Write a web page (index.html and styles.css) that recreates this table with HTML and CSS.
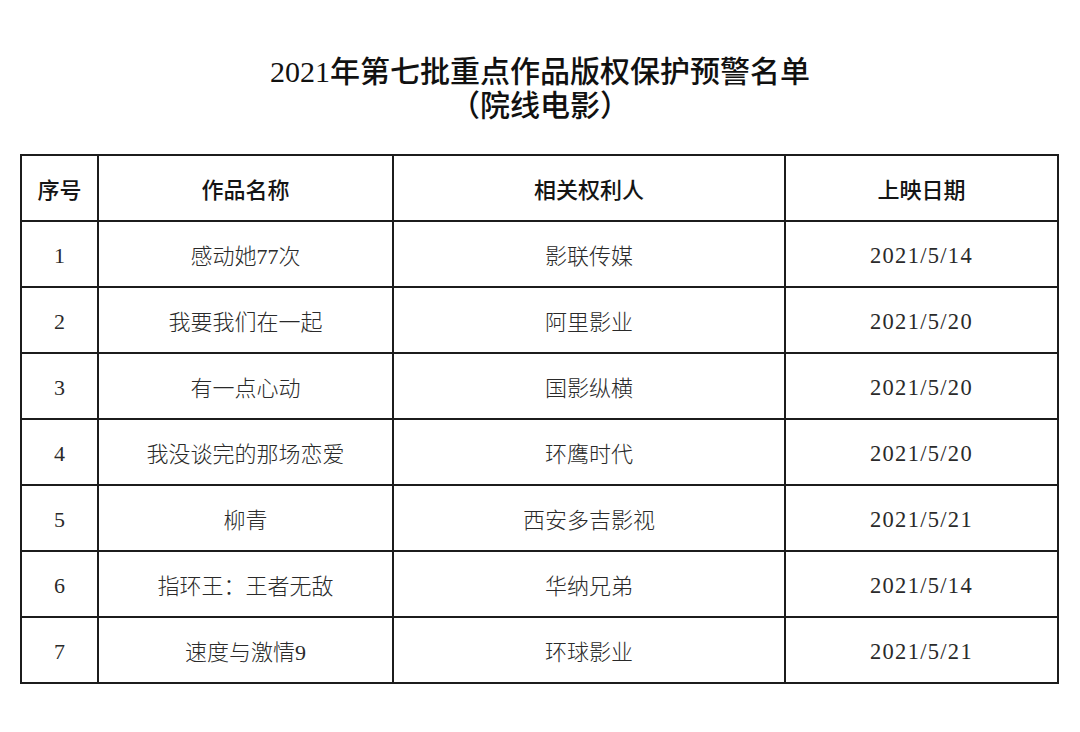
FILE: index.html
```html
<!DOCTYPE html>
<html lang="zh-CN">
<head>
<meta charset="utf-8">
<title>2021年第七批重点作品版权保护预警名单</title>
<link rel="stylesheet" href="styles.css">
</head>
<body>
<div class="page">
  <h1 class="title">
    <span class="line">2021年第七批重点作品版权保护预警名单</span>
    <span class="line">（院线电影）</span>
  </h1>
  <table class="list">
    <colgroup>
      <col class="c1"><col class="c2"><col class="c3"><col class="c4">
    </colgroup>
    <thead>
      <tr><th>序号</th><th>作品名称</th><th>相关权利人</th><th>上映日期</th></tr>
    </thead>
    <tbody>
      <tr><td class="num">1</td><td>感动她77次</td><td>影联传媒</td><td class="date">2021/5/14</td></tr>
      <tr><td class="num">2</td><td>我要我们在一起</td><td>阿里影业</td><td class="date">2021/5/20</td></tr>
      <tr><td class="num">3</td><td>有一点心动</td><td>国影纵横</td><td class="date">2021/5/20</td></tr>
      <tr><td class="num">4</td><td>我没谈完的那场恋爱</td><td>环鹰时代</td><td class="date">2021/5/20</td></tr>
      <tr><td class="num">5</td><td>柳青</td><td>西安多吉影视</td><td class="date">2021/5/21</td></tr>
      <tr><td class="num">6</td><td>指环王：王者无敌</td><td>华纳兄弟</td><td class="date">2021/5/14</td></tr>
      <tr><td class="num">7</td><td>速度与激情9</td><td>环球影业</td><td class="date">2021/5/21</td></tr>
    </tbody>
  </table>
</div>
</body>
</html>
```

FILE: styles.css
```css
html, body {
  margin: 0;
  padding: 0;
  background: #ffffff;
}
.page {
  width: 1080px;
  height: 732px;
  padding-top: 55px;
  box-sizing: border-box;
}
.title {
  margin: 0;
  display: flex;
  flex-direction: column;
  align-items: center;
  font-family: "Liberation Serif", "Noto Sans CJK SC", serif;
  font-size: 30px;
  font-weight: 500;
  line-height: 34px;
  color: #111111;
}
.title .line {
  display: block;
}
.list {
  margin: 31px 0 0 20px;
  border-collapse: collapse;
  table-layout: fixed;
  width: 1037px;
}
.c1 { width: 77px; }
.c2 { width: 295px; }
.c3 { width: 392px; }
.c4 { width: 273px; }
.list th, .list td {
  border: 2px solid #1c1c1c;
  height: 64px;
  padding: 0;
  text-align: center;
  vertical-align: middle;
}
.list th {
  font-family: "Noto Sans CJK SC", sans-serif;
  font-size: 22px;
  font-weight: 500;
  color: #151515;
}
.list td {
  font-family: "Liberation Serif", "Noto Sans CJK SC", serif;
  font-size: 22px;
  font-weight: 300;
  color: #2a2a2a;
}
.list td.num,
.list td.date {
  padding-top: 3px;
  height: 61px;
}
.list td.date {
  font-size: 22.5px;
  letter-spacing: 1.3px;
  font-weight: 400;
}
```
